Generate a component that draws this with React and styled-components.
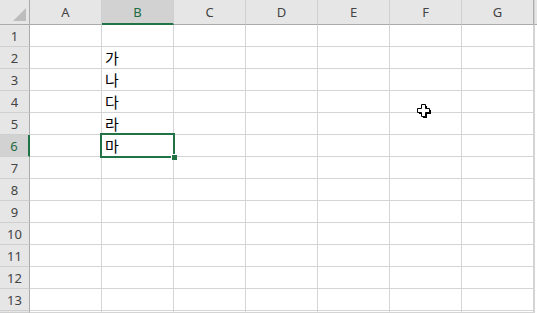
import React from "react";
import styled, { createGlobalStyle, css } from "styled-components";

const Global = createGlobalStyle`
  html, body { margin: 0; padding: 0; background: #fff; overflow: hidden; }
  #root { width: 537px; height: 313px; }
`;

const Sheet = styled.div`
  position: relative;
  display: grid;
  grid-template-columns: 30px repeat(7, 72px) 1fr;
  grid-template-rows: 25px repeat(13, 22px) 1fr;
  width: 537px;
  height: 313px;
  overflow: hidden;
  font-family: "Segoe UI", "Noto Sans", "Open Sans", sans-serif;
`;

const Corner = styled.div`
  position: relative;
  background: #e6e6e6;
  border-right: 1px solid #ababab;
  border-bottom: 1px solid #ababab;
  box-sizing: border-box;
  svg { position: absolute; right: 3px; bottom: 3px; }
`;

const ColHead = styled.div`
  box-sizing: border-box;
  background: ${(p) => (p.$active ? "#d2d2d2" : "#e6e6e6")};
  border-right: 1px solid ${(p) => (p.$edge ? "#ababab" : "#cfcfcf")};
  border-bottom: ${(p) => (p.$active ? "2px solid #217346" : "1px solid #ababab")};
  color: ${(p) => (p.$active ? "#1e6b41" : "#444")};
  font-size: 13px;
  display: flex;
  align-items: center;
  justify-content: center;
  padding-top: ${(p) => (p.$active ? "1px" : "0")};
`;

const RowHead = styled.div`
  box-sizing: border-box;
  background: ${(p) => (p.$active ? "#d2d2d2" : "#e6e6e6")};
  border-right: ${(p) => (p.$active ? "2px solid #217346" : "1px solid #ababab")};
  border-bottom: 1px solid #cfcfcf;
  color: ${(p) => (p.$active ? "#1e6b41" : "#444")};
  font-size: 13px;
  display: flex;
  align-items: center;
  justify-content: center;
  padding-top: 1px;
`;

const Cell = styled.div`
  position: relative;
  box-sizing: border-box;
  border-right: 1px solid #d4d4d4;
  border-bottom: 1px solid #d4d4d4;
  font-family: "Malgun Gothic", "Noto Sans CJK KR", sans-serif;
  font-size: 15px;
  color: #000;
  display: flex;
  align-items: flex-end;
  padding: 0 0 1px 3px;
  line-height: 19px;
  ${(p) =>
    p.$selected &&
    css`
      &::before {
        content: "";
        position: absolute;
        left: -2px;
        top: -2px;
        right: -2px;
        bottom: -2px;
        border: 2px solid #217346;
        z-index: 2;
      }
      &::after {
        content: "";
        position: absolute;
        right: -4px;
        bottom: -4px;
        width: 5px;
        height: 5px;
        background: #217346;
        border: 1px solid #fff;
        border-right: none;
        border-bottom: none;
        z-index: 3;
      }
    `}
`;

const Edge = styled.div`
  box-sizing: border-box;
  border-left: 1px solid #d4d4d4;
  background: ${(p) => (p.$head ? "#e6e6e6" : "#fff")};
  border-bottom: ${(p) => (p.$head ? "1px solid #ababab" : "none")};
`;

const Cursor = styled.svg`
  position: absolute;
  left: 416px;
  top: 103px;
  z-index: 5;
`;

const cols = ["A", "B", "C", "D", "E", "F", "G"];
const values = { 2: "가", 3: "나", 4: "다", 5: "라", 6: "마" };

export default function App() {
  const rows = Array.from({ length: 13 }, (_, i) => i + 1);
  return (
    <>
      <Global />
      <Sheet>
        <Corner>
          <svg width="13" height="13" viewBox="0 0 13 13">
            <polygon points="13,0 13,13 0,13" fill="#bdbdbd" />
          </svg>
        </Corner>
        {cols.map((c, i) => (
          <ColHead key={c} $active={c === "B"} $edge={i === cols.length - 1}>
            {c}
          </ColHead>
        ))}
        <Edge $head />
        {rows.map((r) => (
          <React.Fragment key={r}>
            <RowHead $active={r === 6}>{r}</RowHead>
            {cols.map((c) => (
              <Cell key={c} $selected={c === "B" && r === 6}>
                {c === "B" ? values[r] || "" : ""}
              </Cell>
            ))}
            <Edge />
          </React.Fragment>
        ))}
        <RowHead />
        {cols.map((c) => (
          <Cell key={c} />
        ))}
        <Edge />
        <Cursor width="16" height="16" viewBox="0 0 16 16">
          <polygon
            points="6,2 10,2 10,6 14,6 14,10 10,10 10,14 6,14 6,10 2,10 2,6 6,6"
            fill="#000"
            transform="translate(1,1)"
          />
          <polygon
            points="5.5,1.5 9.5,1.5 9.5,5.5 13.5,5.5 13.5,9.5 9.5,9.5 9.5,13.5 5.5,13.5 5.5,9.5 1.5,9.5 1.5,5.5 5.5,5.5"
            fill="#fff"
            stroke="#000"
            strokeWidth="1"
          />
        </Cursor>
      </Sheet>
    </>
  );
}
